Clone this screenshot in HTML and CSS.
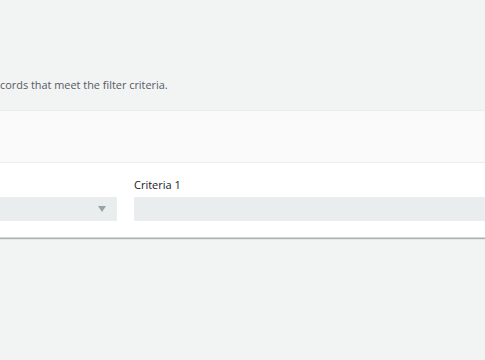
FILE: index.html
```html
<!DOCTYPE html>
<html>
<head>
<meta charset="utf-8">
<link rel="stylesheet" href="styles.css">
</head>
<body>
<div class="page">
  <p class="desc">cords that meet the filter criteria.</p>
  <div class="card">
    <div class="card-header"></div>
    <div class="card-body">
      <div class="field field-select">
        <span class="label"></span>
        <div class="select"><span class="caret"></span></div>
      </div>
      <div class="field field-input">
        <label class="label">Criteria 1</label>
        <div class="input"></div>
      </div>
    </div>
  </div>
</div>
</body>
</html>
```

FILE: styles.css
```css
html, body {
  margin: 0;
  padding: 0;
  background: #f2f3f3;
  font-family: "Open Sans", "Liberation Sans", sans-serif;
  color: #545b64;
}
.page {
  width: 485px;
  height: 360px;
  overflow: hidden;
  padding-top: 77px;
  box-sizing: border-box;
}
.desc {
  margin: 0;
  font-size: 10.9px;
  line-height: 16px;
  color: #545b64;
  white-space: nowrap;
}
.card {
  margin-top: 17px;
  margin-left: -100px;
  width: 700px;
  background: #fff;
  box-shadow: 0 1px 1px 0 rgba(0,28,36,0.3);
  border-bottom: 1px solid #d5dbdb;
}
.card-header {
  background: #fafafa;
  border-top: 1px solid #eaeded;
  border-bottom: 1px solid #eaeded;
  box-sizing: border-box;
  height: 53px;
}
.card-body {
  display: flex;
  gap: 17px;
  padding: 14px 0 16px 0;
}
.field {
  display: flex;
  flex-direction: column;
  gap: 4px;
}
.field-select { width: 217px; }
.field-input { flex: 1; }
.label {
  font-size: 11px;
  line-height: 16px;
  color: #16191f;
  height: 16px;
}
.select, .input {
  height: 24px;
  background: #eaeded;
  border-radius: 1px;
}
.select {
  display: flex;
  align-items: center;
  justify-content: flex-end;
  padding-right: 11px;
}
.caret {
  width: 0;
  height: 0;
  border-left: 4px solid transparent;
  border-right: 4px solid transparent;
  border-top: 6px solid #95a5a6;
}
```
